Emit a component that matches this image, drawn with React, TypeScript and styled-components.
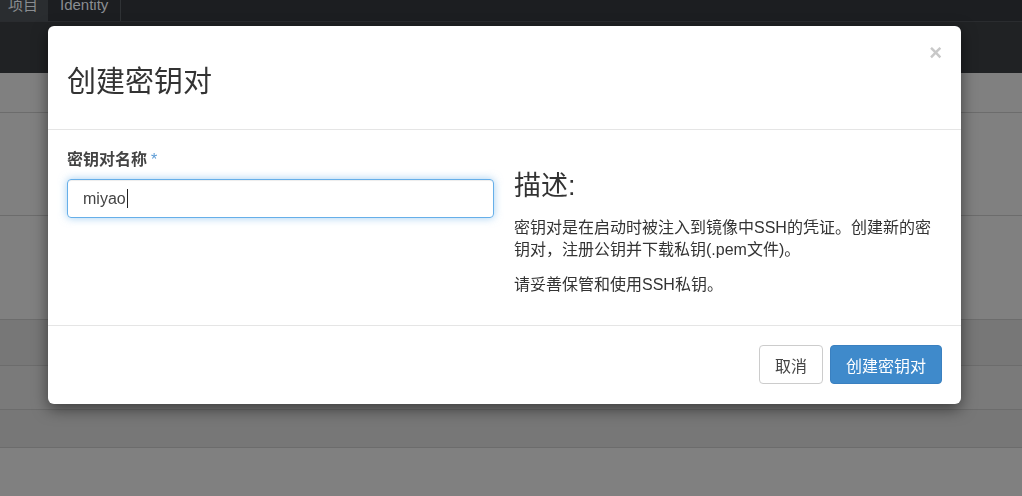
import styled, { createGlobalStyle } from "styled-components";

const GlobalStyle = createGlobalStyle`
  html, body {
    margin: 0;
    padding: 0;
    background: #808080;
    font-family: "Liberation Sans", "Noto Sans CJK SC", sans-serif;
    overflow: hidden;
  }
`;

const Page = styled.div`
  width: 1022px;
  height: 496px;
  display: flex;
  flex-direction: column;
  overflow: hidden;
`;

/* top navigation, scrolled a bit out of view */
const TopNav = styled.div`
  height: 21px;
  display: flex;
  background: #1c1e21;
  border-bottom: 1px solid #2a2c2f;
`;

const Tab = styled.div<{ $active?: boolean }>`
  padding: 0 ${(p) => (p.$active ? "8px" : "12px")};
  background: ${(p) => (p.$active ? "#2a2d30" : "transparent")};
  border-right: 1px solid ${(p) => (p.$active ? "transparent" : "#2f3235")};
  color: #8a8d91;
  font-size: 15px;
  line-height: 10px;
  min-width: ${(p) => (p.$active ? "31px" : "45px")};
`;

const SubBar = styled.div`
  height: 51px;
  background: #202224;
`;

const Row = styled.div<{ $h: number; $bg?: string }>`
  height: ${(p) => p.$h}px;
  background: ${(p) => p.$bg || "#808080"};
  border-bottom: 1px solid #6c6c6c;
  flex-shrink: 0;
`;

const Rest = styled.div`
  flex: 1;
  background: #808080;
`;

/* modal layer */
const Layer = styled.div`
  position: fixed;
  inset: 0;
  display: flex;
  align-items: flex-start;
  padding: 26px 0 0 48px;
`;

const Dialog = styled.div`
  width: 913px;
  background: #fff;
  border-radius: 6px;
  box-shadow: 0 5px 15px rgba(0, 0, 0, 0.5);
  display: flex;
  flex-direction: column;
  color: #333;
`;

const Header = styled.div`
  position: relative;
  padding: 40px 19px 30px;
  border-bottom: 1px solid #e5e5e5;
`;

const Title = styled.h4`
  margin: 0;
  font-size: 29px;
  font-weight: normal;
  line-height: 33px;
  color: #333;
`;

const Close = styled.button`
  position: absolute;
  top: 15px;
  right: 19px;
  padding: 0;
  border: 0;
  background: transparent;
  color: #c8c8c8;
  font-family: "Liberation Sans", sans-serif;
  font-size: 22px;
  font-weight: bold;
  line-height: 24px;
  cursor: pointer;
`;

const Body = styled.div`
  padding: 19px 19px 29px;
  display: grid;
  grid-template-columns: 427px 428px;
  column-gap: 20px;
`;

const Field = styled.div`
  display: flex;
  flex-direction: column;
  gap: 8px;
`;

const Label = styled.label`
  font-size: 16px;
  font-weight: bold;
  line-height: 22px;
  color: #444;
`;

const Required = styled.span`
  color: #5b9bd5;
  font-weight: normal;
  margin-left: 4px;
`;

const Input = styled.div`
  height: 39px;
  box-sizing: border-box;
  border: 1px solid #66afe9;
  border-radius: 4px;
  box-shadow: inset 0 1px 1px rgba(0, 0, 0, 0.075), 0 0 8px rgba(102, 175, 233, 0.6);
  padding: 0 15px;
  display: flex;
  align-items: center;
  font-size: 16px;
  color: #444;
`;

const Caret = styled.span`
  display: inline-block;
  width: 1px;
  height: 19px;
  background: #222;
  margin-left: 1px;
`;

const Side = styled.div`
  display: flex;
  flex-direction: column;
`;

const Heading = styled.h3`
  margin: 23px 0 16px;
  font-size: 27px;
  font-weight: normal;
  line-height: 29px;
  color: #333;
`;

const Text = styled.p`
  margin: 0 0 13px;
  font-size: 16px;
  line-height: 22px;
  color: #333;
  &:last-child {
    margin-bottom: 0;
  }
`;

const Footer = styled.div`
  padding: 19px 19px 20px;
  border-top: 1px solid #e5e5e5;
  display: flex;
  justify-content: flex-end;
  gap: 7px;
`;

const Button = styled.button<{ $primary?: boolean }>`
  height: 39px;
  padding: 0 15px;
  border-radius: 4px;
  border: 1px solid ${(p) => (p.$primary ? "#3a80c0" : "#ccc")};
  background: ${(p) => (p.$primary ? "#3f8acb" : "#fff")};
  color: ${(p) => (p.$primary ? "#fff" : "#444")};
  font-family: "Liberation Sans", "Noto Sans CJK SC", sans-serif;
  font-size: 16px;
  cursor: pointer;
`;

export default function App() {
  return (
    <>
      <GlobalStyle />
      <Page>
        <TopNav>
          <Tab $active>项目</Tab>
          <Tab>Identity</Tab>
        </TopNav>
        <SubBar />
        <Row $h={39} />
        <Row $h={102} />
        <Row $h={103} />
        <Row $h={45} $bg="#777777" />
        <Row $h={43} $bg="#7a7a7a" />
        <Row $h={37} $bg="#777777" />
        <Rest />
      </Page>
      <Layer>
        <Dialog>
          <Header>
            <Title>创建密钥对</Title>
            <Close aria-label="close">×</Close>
          </Header>
          <Body>
            <Field>
              <Label>
                密钥对名称<Required>*</Required>
              </Label>
              <Input>
                miyao
                <Caret />
              </Input>
            </Field>
            <Side>
              <Heading>描述:</Heading>
              <Text>
                密钥对是在启动时被注入到镜像中SSH的凭证。创建新的密钥对，注册公钥并下载私钥(.pem文件)。
              </Text>
              <Text>请妥善保管和使用SSH私钥。</Text>
            </Side>
          </Body>
          <Footer>
            <Button>取消</Button>
            <Button $primary>创建密钥对</Button>
          </Footer>
        </Dialog>
      </Layer>
    </>
  );
}
